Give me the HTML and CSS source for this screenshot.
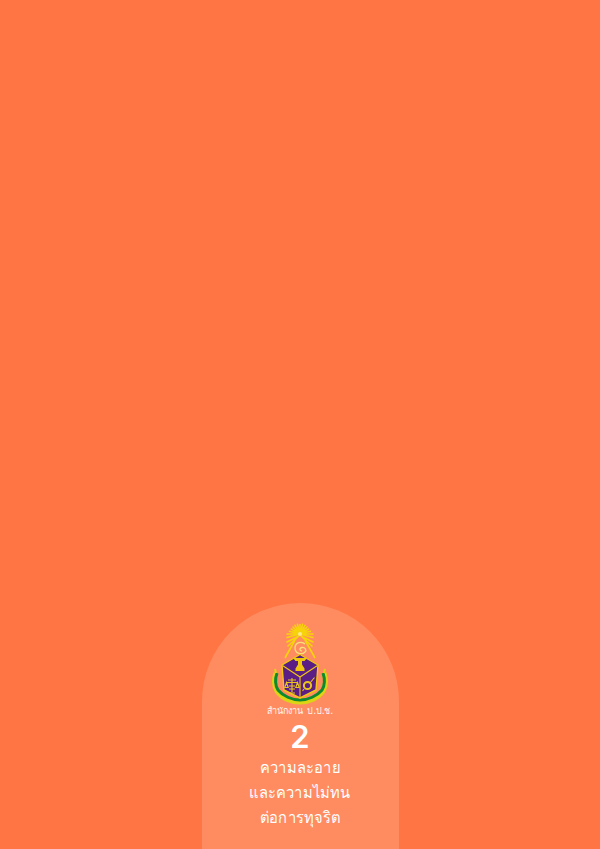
FILE: index.html
```html
<!DOCTYPE html>
<html lang="th">
<head>
<meta charset="utf-8">
<title>ความละอายและความไม่ทนต่อการทุจริต</title>
<link rel="stylesheet" href="styles.css">
</head>
<body>
<main class="cover">
  <section class="tab">
    <svg class="emblem" viewBox="270 622 60 86" width="60" height="86" aria-label="ตราสำนักงาน ป.ป.ช.">
      <g class="rays">
        <path d="M300 634V624.500M300 634l-2.600-9.700M300 634l2.600-9.700M300 634l-5-8.700M300 634l5-8.700M300 634l-7-7M300 634l7-7M300 634l-8.700-5M300 634l8.700-5M300 634l-10.500-2.800M300 634l10.500-2.800M300 634h-13M300 634h13M300 634l-13 3.500M300 634l13 3.500M299 636l-12 6M301 636l12 6M298 637l-10 9M302 637l10 9"/>
      </g>
      <path d="M295 640L285 658M305 640L315 658" class="legs"/>
      <circle cx="300" cy="634" r="2" class="sun"/>
      <path d="M305 644c-3-3-10-2-10 4s7 7 10 4c2-2 0-5-3-4.500s-2.500 3.500 0 3.500" class="swirl"/>
      <path d="M276 673c-2 6-2 13 1 18 5 7 14 11 23 11s18-4 23-11c3-5 3-12 1-18" class="ribbon-gold"/>
      <path d="M277 673c-2 6-2 12 1 17 5 6 14 10 22 10s17-4 22-10c3-5 3-11 1-17" class="ribbon-green"/>
      <path d="M276 673l-1-4M324 673l1-4" class="finial"/>
      <path d="M300 654.500L318 665L316 690L300 698L284 690L282 665Z" class="shield"/>
      <path d="M282.500 665.500L300 677L317.500 665.500M300 677V698" class="seams"/>
      <path d="M293 658h14l-2.500 3h-2.500v3.500l2.500 4v2.500h-9v-2.500l2.500-4v-3.500h-2.500z" class="mark"/>
      <path d="M292 678v14M286 682.500h12M286.500 682.500l-1.700 5h3.400zM297.500 682.500l-1.700 5h3.400zM289 693h6M288 680h8M289 686h6M289 689h6" class="scales"/>
      <circle cx="307.500" cy="685.500" r="3.600" class="wheel"/>
      <path d="M310 683l4.500-5.500M304 689l-1.500 2" class="scales"/>
    </svg>
    <p class="org">สำนักงาน ป.ป.ช.</p>
    <p class="number">2</p>
    <h1 class="title">ความละอาย<br>และความไม่ทน<br>ต่อการทุจริต</h1>
  </section>
</main>
</body>
</html>
```

FILE: styles.css
```css
html, body {
  margin: 0;
  height: 100%;
}

body {
  background: #ff7644;
  overflow: hidden;
}

.cover {
  height: 849px;
  display: flex;
  justify-content: center;
  align-items: flex-end;
}

.tab {
  box-sizing: border-box;
  width: 197px;
  height: 246px;
  padding-top: 19px;
  background: #ff8c60;
  border-radius: 98.5px 98.5px 0 0;
  display: flex;
  flex-direction: column;
  align-items: center;
  color: #fff;
  font-family: "Noto Sans", "Open Sans", "DejaVu Sans", sans-serif;
  text-align: center;
}

.emblem {
  display: block;
  flex: none;
  fill: none;
}

.rays path {
  stroke: #f7d40a;
  stroke-width: 1.6;
  stroke-linecap: round;
}

.legs {
  stroke: #f7d40a;
  stroke-width: 1.6;
}

.sun {
  fill: #ffe98a;
}

.swirl {
  stroke: #fbe07a;
  stroke-width: 1.3;
}

.ribbon-gold {
  stroke: #dcd414;
  stroke-width: 5;
}

.ribbon-green {
  stroke: #0c8a30;
  stroke-width: 3;
}

.finial {
  stroke: #dcd414;
  stroke-width: 2;
}

.shield {
  fill: #5a1e84;
  stroke: #f0c80e;
  stroke-width: 1.4;
  stroke-linejoin: round;
}

.seams {
  stroke: #f0c80e;
  stroke-width: 1.1;
}

.mark {
  fill: #f0c80e;
}

.scales {
  stroke: #e9c520;
  stroke-width: 1.1;
}

.wheel {
  stroke: #e9c520;
  stroke-width: 2;
}

.org {
  margin: -3px 0 0;
  font-size: 9px;
  font-weight: 500;
  line-height: 12px;
  word-spacing: 2px;
  color: #fff6f0;
}

.number {
  margin: 2px 0 0;
  font-family: Inter, "Noto Sans", sans-serif;
  font-size: 31px;
  font-weight: 600;
  line-height: 36px;
}

.title {
  margin: 0;
  font-size: 16px;
  font-weight: 400;
  line-height: 25px;
  white-space: nowrap;
  transform: scaleX(0.92);
}
```
